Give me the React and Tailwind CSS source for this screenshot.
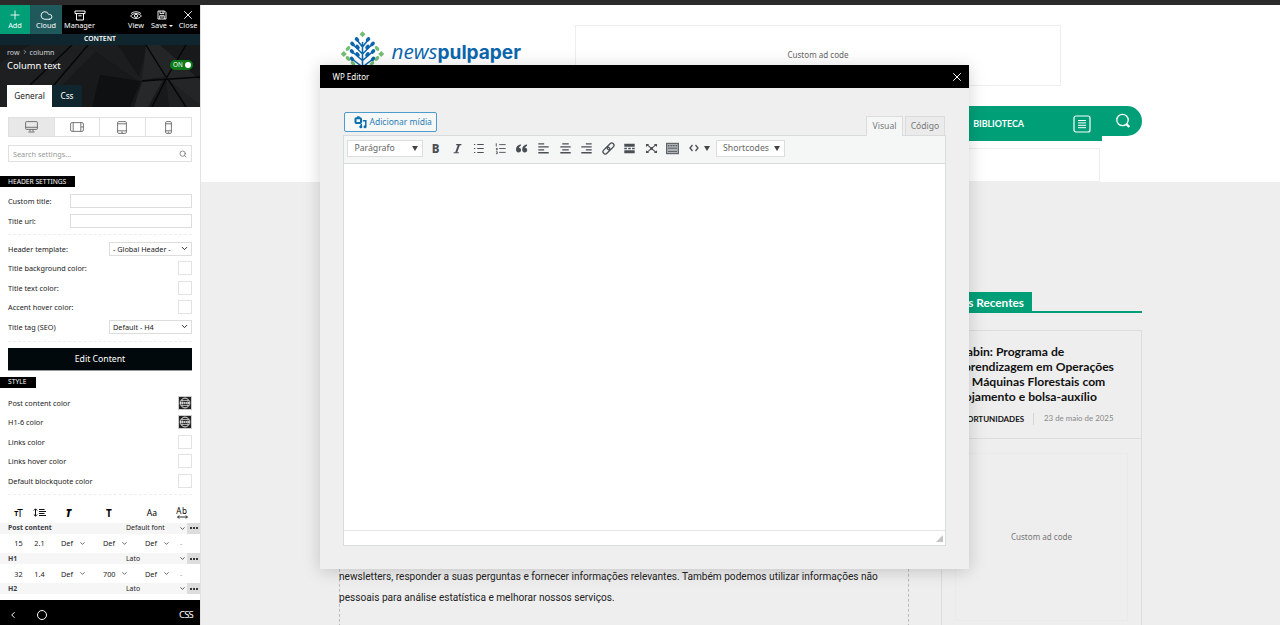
import { Cloud, Plus, X, Search, ChevronDown, ChevronLeft } from "lucide-react";

const noto = "font-['Noto_Sans','Open_Sans',sans-serif]";
const lato = "font-['Lato',sans-serif]";

const headerColors = [
  "Title background color:",
  "Title text color:",
  "Accent hover color:",
];

const styleColors = [
  { label: "Post content color", global: true },
  { label: "H1-6 color", global: true },
  { label: "Links color" },
  { label: "Links hover color" },
  { label: "Default blockquote color" },
];

function ToolButton({ label, className = "", children }) {
  return (
    <button
      className={`flex h-full shrink-0 flex-col items-center pt-[4px] text-[7.3px] leading-[9px] text-white ${className}`}
    >
      <span className="flex h-[12px] items-center justify-center">
        {children}
      </span>
      <span className="flex items-center whitespace-nowrap">{label}</span>
    </button>
  );
}

function Toolbar() {
  return (
    <div className="flex h-[29px] shrink-0 bg-black">
      <ToolButton label="Add" className="w-[30px] bg-[#009f78]">
        <Plus size={14} strokeWidth={1.5} />
      </ToolButton>
      <ToolButton label="Cloud" className="w-8 bg-[#20595c]">
        <Cloud size={13} strokeWidth={1.7} />
      </ToolButton>
      <ToolButton label="Manager" className="w-[35px]">
        <svg width="12" height="11" viewBox="0 0 12 11" fill="none" stroke="#fff">
          <path d="M1 1h10v2.6H1zM2.5 3.6V10h7V3.6M4.3 5.8h3.4" />
        </svg>
      </ToolButton>
      <ToolButton label="View" className="ml-[26px] w-[26px]">
        <svg width="12" height="11" viewBox="0 0 12 11" fill="none" stroke="#fff">
          <path d="M.6 6C3 2.7 9 2.7 11.4 6 9 9.3 3 9.3.6 6ZM1 3.6C3.500 1.2 8.500 1.2 11 3.6" strokeWidth=".9" />
          <circle cx="6" cy="5.8" r="1.6" />
        </svg>
      </ToolButton>
      <ToolButton
        className="w-[26px]"
        label={
          <>
            Save
            <i className="ml-[2px] mt-px border-x-2 border-t-2 border-x-transparent border-t-white" />
          </>
        }
      >
        <svg width="10" height="10" viewBox="0 0 10 10" fill="none" stroke="#fff" strokeWidth=".9">
          <path d="M1 1h6.5L9 2.5V9H1zM3 1v2.6h4V1M2.7 9V5.7h4.6V9M3.7 7h2.6M5.7 1.4v1.2" />
        </svg>
      </ToolButton>
      <ToolButton label="Close" className="w-[26px]">
        <X size={14} strokeWidth={1.6} />
      </ToolButton>
    </div>
  );
}

function PanelHeader() {
  return (
    <div className="relative h-[62px] shrink-0 overflow-hidden bg-[#17191b] text-white">
      <svg className="absolute inset-0" width="201" height="62" viewBox="0 0 201 62">
        <path d="M0 18 30 0h72L40 62H0z" fill="#1d1f21" />
        <path d="M84 0h32l34 24-9 14L98 8z" fill="#1b1d1f" />
        <path d="M100 30 141 36 130 62H92z" fill="#0e1011" />
        <path d="M118 0h28l-7 32z" fill="#141617" />
        <path d="M146 0h14l41 36v26L164 32l-22 3z" fill="#232527" />
        <path d="M142 37 164 33 148 62h-14z" fill="#26282a" />
        <path d="M166 34 201 60v2h-32z" fill="#1e2022" />
        <path
          d="M88 0 42 54M72 0 30 40M142 36l59-4M146 0l20 32M186 0l-19 32-15 30M168 34l18 28"
          fill="none"
          stroke="#050606"
          strokeWidth="1.4"
        />
      </svg>
      <div className="relative flex h-full flex-col">
        <div className="ml-[7px] mt-[2px] flex h-[9px] items-center text-[7.1px] text-gray-300">
          row
          <ChevronLeft size={6} strokeWidth={2.5} className="mx-[2px] rotate-180" />
          column
        </div>
        <div className="ml-[7px] mr-[7px] mt-[3px] flex h-[13px] items-center justify-between text-[9.4px]">
          Column text
          <span className="-mt-[2px] flex h-[10px] w-[23px] items-center justify-between rounded-full bg-[#0b7a17] pl-[3px] pr-[2px] text-[6.3px]">
            ON
            <i className="h-[6px] w-[6px] rounded-full bg-white" />
          </span>
        </div>
        <div className="ml-[7px] mt-auto flex h-[22px] text-[8.3px]">
          <div className="flex w-[45px] items-center justify-center bg-white text-[#222]">
            General
          </div>
          <div className="flex w-[30px] items-center justify-center bg-[#10262f]">
            Css
          </div>
        </div>
      </div>
    </div>
  );
}

function Devices() {
  return (
    <div className="mx-2 mt-[10px] grid h-5 shrink-0 grid-cols-4 divide-x divide-[#e0e0e0] border border-[#e0e0e0] text-[#555]">
      <div className="flex items-center justify-center bg-[#e8e8e8]">
        <svg width="13" height="12" viewBox="0 0 13 12" fill="none" stroke="currentColor" strokeWidth=".8">
          <rect x=".6" y=".6" width="11.8" height="7.8" rx="1" />
          <path d="M.6 6.3h11.8M5 8.4v2M8 8.4v2M3.4 11h6.2" />
        </svg>
      </div>
      <div className="flex items-center justify-center">
        <svg width="14" height="10" viewBox="0 0 14 10" fill="none" stroke="currentColor" strokeWidth=".8">
          <rect x=".6" y=".6" width="12.8" height="8.8" rx="1.5" />
          <path d="M3.2.6v8.8M10.8.6v8.8M12 4v2" />
        </svg>
      </div>
      <div className="flex items-center justify-center">
        <svg width="10" height="13" viewBox="0 0 10 13" fill="none" stroke="currentColor" strokeWidth=".8">
          <rect x=".6" y=".6" width="8.8" height="11.8" rx="1.2" />
          <path d="M.6 2.8h8.8M.6 9.8h8.8M4 11.2h2" />
        </svg>
      </div>
      <div className="flex items-center justify-center">
        <svg width="7" height="13" viewBox="0 0 7 13" fill="none" stroke="currentColor" strokeWidth=".8">
          <rect x=".6" y=".6" width="5.8" height="11.8" rx="1.2" />
          <path d="M.6 2.8h5.8M.6 9.8h5.8M2.8 11.2h1.4" />
        </svg>
      </div>
    </div>
  );
}

function Row({ label, children }) {
  return (
    <div className="mx-2 flex h-[19.5px] items-center justify-between">
      <span>{label}</span>
      {children}
    </div>
  );
}

function Swatch({ global }) {
  if (!global) {
    return <span className="h-[14px] w-[14px] border border-[#e2e2e2] bg-white" />;
  }
  return (
    <span className="h-[14px] w-[14px] border border-[#ccc] bg-[#222]">
      <svg width="12" height="12" viewBox="0 0 12 12" fill="none" stroke="#ddd" strokeWidth=".8">
        <circle cx="6" cy="6" r="4.9" />
        <ellipse cx="6" cy="6" rx="3" ry="4.9" strokeWidth=".5" />
        <path d="M2 3.6h8M2 8.4h8" />
        <path d="M1 6h10" stroke="#fff" strokeWidth="1.6" strokeDasharray="1.6 .4" />
      </svg>
    </span>
  );
}

function Select({ value }) {
  return (
    <div className="flex h-[14px] w-[83px] items-center justify-between border border-[#ddd] pl-[3px] pr-[2px]">
      {value}
      <ChevronDown size={9} strokeWidth={2.5} />
    </div>
  );
}

function Heading({ className, children }) {
  return (
    <div className={`flex h-[11px] shrink-0 items-center bg-black pl-2 text-[6.7px] text-white ${className}`}>
      {children}
    </div>
  );
}

function Divider({ className }) {
  return <div className={`mx-2 border-t border-dashed border-[#ededed] ${className}`} />;
}

function FontRow({ name, font }) {
  return (
    <div className="flex h-[10.5px] shrink-0 items-center bg-[#f6f6f6] pl-2">
      <b className="w-[118px] text-[6.9px] font-bold text-[#3a4048]">{name}</b>
      <span className="w-[53px] text-[6.9px]">{font}</span>
      <ChevronDown size={7} strokeWidth={2.5} />
      <span className="ml-auto flex h-full w-[13px] items-center justify-center gap-px bg-[#ddd]">
        <i className="h-[2px] w-[2px] rounded-full bg-black" />
        <i className="h-[2px] w-[2px] rounded-full bg-black" />
        <i className="h-[2px] w-[2px] rounded-full bg-black" />
      </span>
    </div>
  );
}

function FontValues({ size, line, values }) {
  return (
    <div className="flex h-[19.7px] shrink-0 items-center pl-2">
      <span className="w-[21px] text-center">{size}</span>
      <span className="w-[21px] text-center">{line}</span>
      <div className="ml-[11px] flex">
        {values.map((value, i) => (
          <span key={i} className="flex w-[42px] items-center">
            <span className="w-[18px]">{value}</span>
            <ChevronDown size={7} strokeWidth={2.3} />
          </span>
        ))}
      </div>
      <span className="-ml-[7px] text-[#999]">-</span>
    </div>
  );
}

function FontIcons() {
  return (
    <div className="mt-[7px] flex h-[21px] shrink-0 items-center pl-2 text-black">
      <span className="flex w-[21px] items-end justify-center font-bold leading-[10px]">
        <span className="text-[7px] leading-[8px]">T</span>
        <span className="-ml-px text-[10px] font-normal">T</span>
      </span>
      <span className="flex w-[21px] justify-center">
        <svg width="13" height="9" viewBox="0 0 13 9" fill="none" stroke="#111">
          <path d="M2.5 1v7M.8 2.5 2.5.8l1.7 1.7M.8 6.5l1.7 1.7 1.7-1.7M6 1.5h5.5M6 3.5h7M6 5.5h5.5M6 7.5h7" />
        </svg>
      </span>
      <span className="w-[37px] text-center text-[10px] font-black italic">T</span>
      <span className="w-[44px] text-center text-[10px] font-bold">T</span>
      <span className="w-[42px] text-center text-[8.6px]">Aa</span>
      <span className="flex w-[18px] flex-col items-center text-[8px] leading-[8px] tracking-[.7px]">
        Ab
        <svg width="11" height="4" viewBox="0 0 11 4" fill="none" stroke="#111" strokeWidth=".9">
          <path d="M.6 2h9.8M2.2.4.6 2l1.6 1.6M8.8.4 10.4 2 8.8 3.6" />
        </svg>
      </span>
    </div>
  );
}

function Sidebar() {
  return (
    <aside className={`flex h-[620px] w-[201px] shrink-0 flex-col border-r border-[#e2e2e2] bg-white text-[7.3px] leading-[10px] text-[#222] ${noto}`}>
      <Toolbar />
      <div className="flex h-[11px] shrink-0 items-center justify-center bg-[#10262f] pb-px text-[6.8px] font-semibold text-white">
        CONTENT
      </div>
      <PanelHeader />
      <Devices />
      <div className="mx-2 mt-2 flex h-[17px] shrink-0 items-center justify-between border border-[#e0e0e0] px-1 text-[#999]">
        Search settings...
        <Search size={8} strokeWidth={2.2} className="text-[#666]" />
      </div>

      <Heading className="mt-[14px] w-[75px]">HEADER SETTINGS</Heading>
      <div className="mt-[4.6px]">
        <Row label="Custom title:">
          <span className="h-[14px] w-[122px] border border-[#ddd]" />
        </Row>
        <Row label="Title url:">
          <span className="h-[14px] w-[122px] border border-[#ddd]" />
        </Row>
      </div>
      <Divider className="mt-[3.4px]" />
      <div className="mt-[4.2px]">
        <Row label="Header template:">
          <Select value="- Global Header -" />
        </Row>
        {headerColors.map((label) => (
          <Row key={label} label={label}>
            <Swatch />
          </Row>
        ))}
        <Row label="Title tag (SEO)">
          <Select value="Default - H4" />
        </Row>
      </div>
      <Divider className="mt-[4px]" />
      <button className="mx-2 mt-[6.3px] h-[23px] shrink-0 border-b border-[#999] bg-[#02090c] text-[8.7px] text-white">
        Edit Content
      </button>

      <Heading className="mt-[6px] w-[36px]">STYLE</Heading>
      <div className="mt-[5px]">
        {styleColors.map(({ label, global }) => (
          <Row key={label} label={label}>
            <Swatch global={global} />
          </Row>
        ))}
      </div>
      <Divider className="mt-[3.6px]" />

      <FontIcons />
      <FontRow name="Post content" font="Default font" />
      <FontValues size="15" line="2.1" values={["Def", "Def", "Def"]} />
      <FontRow name="H1" font="Lato" />
      <FontValues size="32" line="1.4" values={["Def", "700", "Def"]} />
      <FontRow name="H2" font="Lato" />

      <div className="mt-auto flex h-[25px] shrink-0 items-center bg-black pl-[8px] pr-[7px] pt-[4px] text-white">
        <ChevronLeft size={10} strokeWidth={2.3} />
        <i className="ml-[19px] h-[10px] w-[10px] rounded-full border border-white" />
        <span className="ml-auto text-[9.5px] tracking-[-.8px]">CSS</span>
      </div>
    </aside>
  );
}

const leaves = [
  [357, 39.5, 45], [368, 39.5, -45], [352.5, 44, 45], [372.5, 44, -45],
  [357.5, 47, 45], [367.5, 47, -45], [352, 51.5, 45], [373, 51.5, -45],
  [357.5, 54.5, 45], [367.5, 54.5, -45], [352, 59, 45], [373, 59, -45],
];
const greenLeaves = [
  [348, 48.5, -45], [377, 48.5, 45], [348, 58.5, 45], [377, 58.5, -45],
  [353, 63.5, 45], [372, 63.5, -45],
];

function Logo() {
  return (
    <svg width="184" height="42" viewBox="340 30 184 42">
      <g fill="none" stroke="#0b66ad" strokeWidth="1.5">
        <path d="M362.5 42v28M357 40l5.5 7 5.5-7M352.500 44l10 10 10-10M352 51.500l10.500 9 10.500-9M352 59l10.500 8 10.500-8" />
      </g>
      {leaves.map(([x, y, angle]) => (
        <ellipse
          key={`${x}-${y}`}
          cx={x}
          cy={y}
          rx="2.6"
          ry="1.9"
          fill="#0b66ad"
          transform={`rotate(${angle} ${x} ${y})`}
        />
      ))}
      {greenLeaves.map(([x, y, angle]) => (
        <ellipse
          key={`${x}-${y}`}
          cx={x}
          cy={y}
          rx="2.7"
          ry="1.8"
          fill="#74bd75"
          transform={`rotate(${angle} ${x} ${y})`}
        />
      ))}
      <path d="M362.500 31.300l3 3-3 3-3-3zM343.800 51l3 3-3 3-3-3zM381.200 51l3 3-3 3-3-3z" fill="#74bd75" />
      <text x="391.5" y="59" fill="#0b66ad" fontSize="19.5" fontFamily="Open Sans, sans-serif" fontStyle="italic" textLength="46" lengthAdjust="spacingAndGlyphs">
        news
      </text>
      <text x="437.500" y="59" fill="#0b66ad" fontSize="19" fontFamily="Inter, sans-serif" fontWeight="700" textLength="83.500" lengthAdjust="spacingAndGlyphs">
        pulpaper
      </text>
    </svg>
  );
}

function SiteHeader() {
  return (
    <header className="h-[177px] bg-white">
      <div className="flex h-[101px] items-start pl-[139px] pt-5">
        <div className="mt-[5px] w-[235px]">
          <Logo />
        </div>
        <div className={`flex h-[61px] w-[486px] items-center justify-center border border-[#eee] text-[8.05px] text-[#666] ${noto}`}>
          Custom ad code
        </div>
      </div>
      <nav className={`flex h-[36px] items-start text-white ${lato}`}>
        <div className="ml-[139px] flex h-[35px] w-[762px] items-center justify-end bg-[#009f78] pr-[11px]">
          <span className="mr-[49px] text-[8.9px] font-bold">BIBLIOTECA</span>
          <svg width="18" height="18" viewBox="0 0 18 18" fill="none" stroke="#fff" className="mt-px">
            <rect x="1" y="1" width="16" height="16" rx="2" strokeWidth="1.2" />
            <path d="M5 5.500h8M5 7.900h8M5 10.300h8M5 12.700h8" />
          </svg>
        </div>
        <div className="flex h-[30px] w-[39.5px] items-center rounded-r-full bg-[#009f78] pl-[13px]">
          <svg width="16" height="16" viewBox="0 0 16 16" fill="none" stroke="#fff">
            <circle cx="7.500" cy="7" r="5.700" strokeWidth="1.300" />
            <path d="M11.300 11l3 3" strokeWidth="2.400" />
          </svg>
        </div>
      </nav>
      <div className="ml-[139px] mt-[6px] h-[34px] w-[760px] border border-[#eee]" />
    </header>
  );
}

function RecentNews() {
  return (
    <aside className={`ml-[32px] w-[201px] ${lato}`}>
      <div className="mt-[110px] flex border-b-2 border-[#009f78]">
        <h4 className="flex h-[19px] w-[91px] items-center justify-end whitespace-nowrap bg-[#009f78] pr-2 pt-[3px] text-[11.8px] font-bold text-white">
          Mais Recentes
        </h4>
      </div>
      <div className="mt-[17px] h-[400px] border border-[#dcdcdc]">
        <div className="h-[108px] border-b border-[#dcdcdc] pl-[13.5px] pt-[13px]">
          <h3 className="whitespace-nowrap text-[12.15px] font-bold leading-[15.100px] text-[#111]">
            Klabin: Programa de
            <br />
            Aprendizagem em Operações
            <br />
            de Máquinas Florestais com
            <br />
            alojamento e bolsa-auxílio
          </h3>
          <div className="mt-[9px] flex h-3 items-center text-[7.9px]">
            <b className="w-[78px] border-r border-[#d4d4d4] text-[8px] text-[#111]">OPORTUNIDADES</b>
            <span className="ml-[10.5px] text-[#888]">23 de maio de 2025</span>
          </div>
        </div>
        <div className={`ml-[13px] mt-[14px] flex h-[168px] w-[173px] items-center justify-center border border-[#eaeaea] text-[8.05px] text-[#777] ${noto}`}>
          Custom ad code
        </div>
      </div>
    </aside>
  );
}

function Page() {
  return (
    <main className="h-[620px] flex-1 overflow-hidden bg-[#eee]">
      <SiteHeader />
      <div className="flex h-[460px] items-start">
        <article className="ml-[138px] flex h-[460px] w-[570px] flex-col border-x border-dashed border-[#bbb]">
          <p className="-ml-px mt-[384px] whitespace-nowrap font-['Roboto',sans-serif] text-[10.12px] leading-[21px] text-[#222]">
            newsletters, responder a suas perguntas e fornecer informações
            relevantes. Também podemos utilizar informações não
            <br />
            pessoais para análise estatística e melhorar nossos serviços.
          </p>
        </article>
        <RecentNews />
      </div>
    </main>
  );
}

const mceIcons = [
  { name: "ul", body: <path d="M3 4h2M3 10h2M3 16h2M8 4h10M8 10h10M8 16h10" strokeWidth="1.600" /> },
  { name: "ol", body: <path d="M3.500 2v5M3 10h2v2H3M3 15h2v3H3M8 4h10M8 10h10M8 16h10" strokeWidth="1.400" /> },
  {
    name: "quote",
    body: (
      <path
        d="M9 3.500C4.500 4.500 1.500 7 1.500 11.500c0 2.500 1.500 4.500 4 4.500S9.300 14.300 9.300 12.300 7.700 9 6 9c.3-1.400 1.500-2.600 3-3.300zM18.500 3.500c-4.500 1-7.500 3.500-7.500 8 0 2.500 1.500 4.500 4 4.500s3.800-1.700 3.800-3.700S17.200 9 15.500 9c.3-1.400 1.500-2.600 3-3.300z"
        fill="currentColor"
        stroke="none"
      />
    ),
  },
  { name: "left", body: <path d="M2 3h9M2 7.500h16M2 12h9M2 16.500h16" /> },
  { name: "center", body: <path d="M5 3h10M2 7.500h16M5 12h10M2 16.500h16" /> },
  { name: "right", body: <path d="M9 3h9M2 7.500h16M9 12h9M2 16.500h16" /> },
  {
    name: "link",
    body: (
      <g transform="rotate(-45 10 10)">
        <rect x="-.5" y="6.500" width="12" height="7" rx="3.500" />
        <rect x="8.500" y="6.500" width="12" height="7" rx="3.500" />
      </g>
    ),
  },
  {
    name: "more",
    body: (
      <>
        <path d="M2 5h16M2 15h16" strokeWidth="4.500" />
        <path d="M2 10h16" strokeWidth="2" strokeDasharray="4 2" />
      </>
    ),
  },
  {
    name: "fullscreen",
    body: (
      <>
        <path d="M3 4l14 12M17 4 3 16" strokeWidth="1.800" />
        <path d="M1.500 7.500V3h5zM18.500 7.500V3h-5zM1.500 12.500V17h5zM18.500 12.500V17h-5z" fill="currentColor" stroke="none" />
        <path d="M8 8h4v4H8z" fill="currentColor" stroke="none" />
      </>
    ),
  },
  {
    name: "toggle",
    body: (
      <>
        <rect x="1" y="2" width="18" height="16" fill="#b0b4b8" strokeWidth="1.500" />
        <path d="M3 5.500h14" strokeWidth="2" strokeDasharray="1.500 1" />
        <path d="M3 9.500h14M3 14.500h14" strokeWidth="1.300" />
      </>
    ),
  },
];

function Caret() {
  return <i className="border-x-[3px] border-t-[5px] border-x-transparent border-t-[#444]" />;
}

function EditorToolbar() {
  return (
    <div className="flex h-[28px] shrink-0 items-center border-b border-[#d9dcdc] bg-[#f5f7f7] pb-[2px] pl-[3px] text-[8.700px] text-[#666]">
      <div className="flex h-[17px] w-[76px] items-center justify-between border border-[#ddd] bg-white pl-[6px] pr-1">
        Parágrafo
        <Caret />
      </div>
      <div className="ml-[1.500px] flex text-[#4a4f55]">
        <span className="flex w-[21.600px] items-center justify-center text-[11.500px] font-extrabold leading-[14px]">B</span>
        <span className="flex w-[21.600px] items-center justify-center">
          <svg width="13" height="13" viewBox="0 0 20 20" fill="none" stroke="currentColor">
            <path d="M8 4h8M4 16.500h8" strokeWidth="1.800" />
            <path d="M12.300 4 7.800 16.500" strokeWidth="3" />
          </svg>
        </span>
        {mceIcons.map(({ name, body }) => (
          <span key={name} className="flex w-[21.550px] items-center justify-center">
            <svg width="13" height="13" viewBox="0 0 20 20" fill="none" stroke="currentColor" strokeWidth="2">
              {body}
            </svg>
          </span>
        ))}
        <span className="flex w-[32px] items-center justify-center gap-[5px]">
          <svg width="10" height="8" viewBox="0 0 10 8" fill="none" stroke="currentColor" strokeWidth="1.300" className="-mt-[2px]">
            <path d="M3.500 1 1 4l2.500 3M6.500 1 9 4 6.500 7" />
          </svg>
          <Caret />
        </span>
      </div>
      <div className="ml-[.5px] flex h-[17px] w-[69px] items-center justify-between border border-[#ddd] bg-white pl-[6px] pr-1">
        Shortcodes
        <Caret />
      </div>
    </div>
  );
}

function EditorModal() {
  return (
    <section className={`absolute left-[320px] top-[65px] flex h-[504px] w-[649px] flex-col bg-[#efefef] shadow-[0_2px_16px_rgba(0,0,0,0.18)] ${noto}`}>
      <div className="flex h-[23px] items-center justify-between bg-black pl-[12.5px] pr-[5px] text-[8px] text-white">
        WP Editor
        <X size={14} strokeWidth={1.700} />
      </div>
      <div className="ml-[24px] mr-[24px] mt-[24px] flex h-[23px] items-start justify-between">
        <button className="flex h-[20px] w-[93px] items-center rounded-[2px] border border-[#4f9bcb] bg-[#f6f7f7] pl-[8.500px] text-[8.500px] text-[#2b80b5]">
          <svg width="13" height="13" viewBox="0 0 13 13" fill="none" stroke="#0a6fac" className="mr-[3px]">
            <rect x="1.500" y="2.300" width="5.500" height="4.700" rx=".8" strokeWidth="2" />
            <path d="M3 1h2.600" strokeWidth="1.500" />
            <path d="M8.800 4.800h3v5.500M7.300 8v2.500" strokeWidth="1.500" />
            <circle cx="6.800" cy="10.700" r="1.500" fill="#0a6fac" stroke="none" />
            <circle cx="11" cy="10.700" r="1.500" fill="#0a6fac" stroke="none" />
          </svg>
          Adicionar mídia
        </button>
        <div className="flex self-end text-[8.600px] text-[#777]">
          <div className="z-10 -mb-px flex h-[20px] w-[37px] items-center justify-center border border-b-0 border-[#dcdcdc] bg-[#f5f7f7]">
            Visual
          </div>
          <div className="ml-[2px] flex h-[19px] w-[40px] items-center justify-center border border-b-0 border-[#dcdcdc] bg-[#ebebeb]">
            Código
          </div>
        </div>
      </div>
      <div className="ml-[23.400px] mr-[23.500px] flex h-[411px] flex-col border border-[#d9dcdc] bg-white">
        <EditorToolbar />
        <div className="flex-1" />
        <div className="flex h-[15px] items-end justify-end border-t border-[#e5e5e5] pb-[3px] pr-[2px]">
          <svg width="7" height="7" viewBox="0 0 8 8">
            <path d="M8 0v8H0z" fill="#c4c4c4" />
          </svg>
        </div>
      </div>
    </section>
  );
}

export default function App() {
  return (
    <div className="relative h-[625px] w-[1280px] overflow-hidden bg-[#2b2b2b] pt-[5px]">
      <div className="flex">
        <Sidebar />
        <Page />
      </div>
      <EditorModal />
    </div>
  );
}
